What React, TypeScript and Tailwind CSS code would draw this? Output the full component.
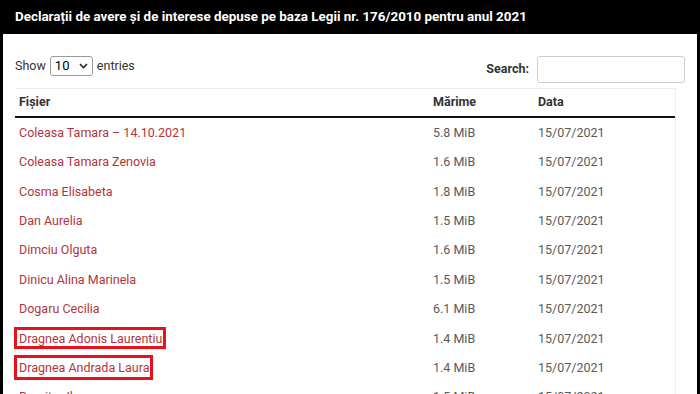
import React from "react";

const rows = [
  { name: "Coleasa Tamara – 14.10.2021", size: "5.8 MiB", date: "15/07/2021" },
  { name: "Coleasa Tamara Zenovia", size: "1.6 MiB", date: "15/07/2021" },
  { name: "Cosma Elisabeta", size: "1.8 MiB", date: "15/07/2021" },
  { name: "Dan Aurelia", size: "1.5 MiB", date: "15/07/2021" },
  { name: "Dimciu Olguta", size: "1.6 MiB", date: "15/07/2021" },
  { name: "Dinicu Alina Marinela", size: "1.5 MiB", date: "15/07/2021" },
  { name: "Dogaru Cecilia", size: "6.1 MiB", date: "15/07/2021" },
  { name: "Dragnea Adonis Laurentiu", size: "1.4 MiB", date: "15/07/2021", mark: "a" },
  { name: "Dragnea Andrada Laura", size: "1.4 MiB", date: "15/07/2021", mark: "b" },
  { name: "Dumitru Ileana", size: "1.5 MiB", date: "15/07/2021" },
];

export default function App() {
  return (
    <div className="w-[700px] h-[394px] overflow-hidden bg-white font-['Roboto',sans-serif]">
      <div className="h-[34px] bg-black flex items-center px-[15px]">
        <span className="text-white font-bold text-[13.4px]">
          Declarații de avere și de interese depuse pe baza Legii nr. 176/2010 pentru anul 2021
        </span>
      </div>
      <div className="border-x-[3px] border-black h-[360px] pl-[12px] pr-[12px] pt-[22px]">
        <div className="flex justify-between items-start h-[32px]">
          <div className="flex items-center gap-[4px] text-[12.5px] text-[#333]">
            <span>Show</span>
            <div className="w-[43px] h-[20px] border border-[#999] rounded-[3px] flex items-center justify-between px-[4px] text-[13px] text-black">
              <span>10</span>
              <svg width="9" height="6" viewBox="0 0 9 6">
                <path d="M1 1l3.5 3.5L8 1" stroke="#222" strokeWidth="1.6" fill="none" />
              </svg>
            </div>
            <span>entries</span>
          </div>
          <div className="flex items-center gap-[8px]">
            <span className="text-[12.5px] font-bold text-[#333]">Search:</span>
            <div className="w-[148px] h-[27px] border border-[#ccc] rounded-[3px]" />
          </div>
        </div>
        <div className="w-[661px] border-t border-r border-[#eee]">
          <div className="grid grid-cols-[414px_105px_1fr] h-[29px] items-center border-b-2 border-[#111] text-[12.5px] font-bold text-[#333]">
            <span className="pl-[4px]">Fișier</span>
            <span className="pl-[4px]">Mărime</span>
            <span className="pl-[4px]">Data</span>
          </div>
          {rows.map((r, i) => (
            <div
              key={i}
              className="grid grid-cols-[414px_105px_1fr] h-[29.4px] items-center text-[12.5px] pt-[1px]"
            >
              <span className="pl-[4px]">
                <span className="relative text-[#b3343b]">
                  {r.name}
                  {r.mark === "a" && (
                    <span className="absolute -left-[5px] -right-[4px] -top-[4px] -bottom-[3px] border-[3px] border-[#e8101a]" />
                  )}
                  {r.mark === "b" && (
                    <span className="absolute -left-[5px] -right-[3px] -top-[5px] -bottom-[5px] border-[3px] border-[#e8101a]" />
                  )}
                </span>
              </span>
              <span className="pl-[4px] text-[#5a5a5a]">{r.size}</span>
              <span className="pl-[4px] text-[#5a5a5a]">{r.date}</span>
            </div>
          ))}
        </div>
      </div>
    </div>
  );
}
